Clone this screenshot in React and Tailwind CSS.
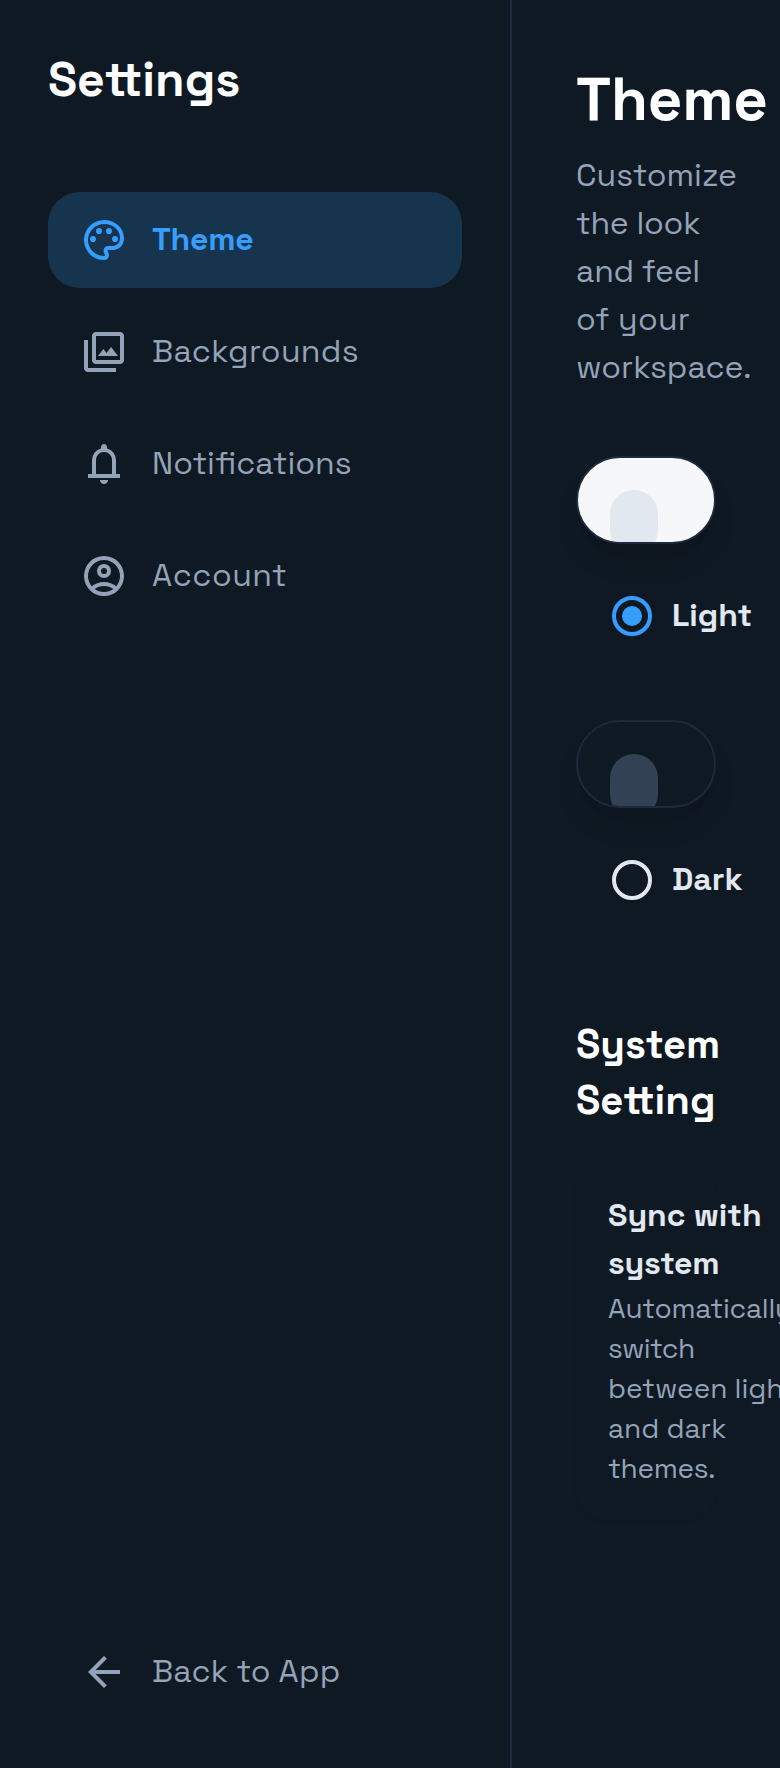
const PATHS = {
  palette:
    "M480-80q-82 0-155-31.5t-127.5-86Q143-252 111.5-325T80-480q0-83 32.5-156t88-127Q256-817 330-848.5T488-880q80 0 151 27.5t124.5 76q53.5 48.5 85 115T880-518q0 115-70 176.5T640-280h-74q-9 0-12.5 5t-3.5 11q0 12 15 34.5t15 51.5q0 50-27.5 74T480-80Zm-220-360q26 0 43-17t17-43q0-26-17-43t-43-17q-26 0-43 17t-17 43q0 26 17 43t43 17Zm120-160q26 0 43-17t17-43q0-26-17-43t-43-17q-26 0-43 17t-17 43q0 26 17 43t43 17Zm200 0q26 0 43-17t17-43q0-26-17-43t-43-17q-26 0-43 17t-17 43q0 26 17 43t43 17Zm120 160q26 0 43-17t17-43q0-26-17-43t-43-17q-26 0-43 17t-17 43q0 26 17 43t43 17ZM480-160q9 0 14.5-5t5.5-13q0-14-15-33t-15-57q0-42 29-67t71-25h70q66 0 113-38.5T800-518q0-121-92.5-201.5T488-800q-136 0-232 93t-96 227q0 133 93.5 226.5T480-160Z",
  photos:
    "M360-400h400L622-580l-92 120-62-80-108 140Zm-40 160q-33 0-56.5-23.5T240-320v-480q0-33 23.5-56.5T320-880h480q33 0 56.5 23.5T880-800v480q0 33-23.5 56.5T800-240H320Zm0-80h480v-480H320v480ZM160-80q-33 0-56.5-23.5T80-160v-560h80v560h560v80H160Z",
  bell: "M160-200v-80h80v-280q0-83 50-147.5T420-792v-28q0-25 17.5-42.5T480-880q25 0 42.5 17.5T540-820v28q80 20 130 84.5T720-560v280h80v80H160Zm320 120q-33 0-56.5-23.5T400-160h160q0 33-23.5 56.5T480-80ZM320-280h320v-280q0-66-47-113t-113-47q-66 0-113 47t-47 113v280Z",
  account:
    "M234-276q51-39 114-61.5T480-360q69 0 132 22.5T726-276q35-41 54.5-93T800-480q0-133-93.5-226.5T480-800q-133 0-226.5 93.5T160-480q0 59 19.5 111t54.5 93Zm246-164q-59 0-99.5-40.5T340-580q0-59 40.5-99.5T480-720q59 0 99.5 40.5T620-580q0 59-40.5 99.5T480-440Zm0 360q-83 0-156-31.5T197-197q-54-54-85.5-127T80-480q0-83 31.5-156T197-763q54-54 127-85.5T480-880q83 0 156 31.5T763-763q54 54 85.5 127T880-480q0 83-31.5 156T763-197q-54 54-127 85.5T480-80Zm0-80q53 0 100-15.5t86-44.5q-39-29-86-44.5T480-280q-53 0-100 15.5T294-220q39 29 86 44.5T480-160Zm0-360q26 0 43-17t17-43q0-26-17-43t-43-17q-26 0-43 17t-17 43q0 26 17 43t43 17Z",
  back: "m313-440 224 224-57 56-320-320 320-320 57 56-224 224h487v80H313Z",
};

function Icon({ name }) {
  return (
    <svg className="size-12 shrink-0" viewBox="0 -960 960 960" fill="currentColor" aria-hidden="true">
      <path d={PATHS[name]} />
    </svg>
  );
}

function NavItem({ icon, label, active, tracking }) {
  return (
    <a
      className={
        "flex h-24 items-center gap-6 rounded-[32px] px-8 text-[32px] leading-[48px] " +
        (active ? "bg-[#17344f] font-bold text-[#359eff]" : "text-[#94a3b8]")
      }
    >
      <Icon name={icon} />
      <span className={"pb-0.5 whitespace-nowrap " + tracking}>{label}</span>
    </a>
  );
}

function ThemeOption({ label, checked, surface, shape }) {
  return (
    <div className="flex flex-col gap-6">
      <div
        className={
          "h-[88px] w-[140px] overflow-hidden rounded-[48px] border-2 border-[#1e293b] pt-8 pl-8 shadow-[0_20px_30px_-6px_rgba(0,0,0,0.1),0_8px_12px_-8px_rgba(0,0,0,0.1)] " +
          surface
        }
      >
        <div className={"h-16 w-12 rounded-[24px] " + shape} />
      </div>
      <div className="flex h-24 items-center gap-4 pl-8">
        <svg
          className={"size-12 shrink-0 " + (checked ? "text-[#359eff]" : "text-[#e2e8f0]")}
          viewBox="0 0 48 48"
          fill="none"
        >
          <circle cx="24" cy="24" r="18" stroke="currentColor" strokeWidth="4" />
          {checked && <circle cx="24" cy="24" r="10" fill="currentColor" />}
        </svg>
        <span className="pb-0.5 text-[32px] leading-[48px] font-bold whitespace-nowrap text-[#e2e8f0]">
          {label}
        </span>
      </div>
    </div>
  );
}

function Line({ children, tracking = "" }) {
  return <span className={"block whitespace-nowrap " + tracking}>{children}</span>;
}

export default function App() {
  return (
    <div className="flex h-[1768px] w-[780px] overflow-hidden bg-[#0f1923] font-['Space_Grotesk',Inter,sans-serif]">
      <aside className="flex w-[512px] shrink-0 flex-col border-r-2 border-[#1e293b] p-12">
        <h1 className="text-[48px] leading-[63px] font-bold text-white">Settings</h1>
        <nav className="mt-[81px] flex flex-col gap-4">
          <NavItem icon="palette" label="Theme" tracking="tracking-[-0.25px]" active />
          <NavItem icon="photos" label="Backgrounds" tracking="tracking-[0.35px]" />
          <NavItem icon="bell" label="Notifications" tracking="[font-feature-settings:'liga'] tracking-normal" />
          <NavItem icon="account" label="Account" tracking="tracking-[0.5px]" />
        </nav>
        <div className="mt-auto">
          <NavItem icon="back" label="Back to App" tracking="tracking-[0.15px]" />
        </div>
      </aside>
      <main className="flex w-[268px] shrink-0 flex-col px-16 pt-[62px]">
        <h2 className="text-[60px] leading-[75px] font-bold text-white">
          <Line tracking="tracking-[-0.2px]">Theme</Line>
        </h2>
        <p className="mt-[14px] text-[32px] leading-[48px] text-[#94a3b8]">
          <Line>Customize</Line>
          <Line tracking="tracking-[-0.25px]">the look</Line>
          <Line tracking="tracking-[-0.25px]">and feel</Line>
          <Line tracking="tracking-[0.2px]">of your</Line>
          <Line>workspace.</Line>
        </p>
        <div className="mt-[65px] flex flex-col gap-14">
          <ThemeOption label="Light" checked surface="bg-[#f5f7f8]" shape="bg-[#e2e8f0]" />
          <ThemeOption label="Dark" surface="bg-[#0f1923]" shape="bg-[#334155]" />
        </div>
        <h3 className="mt-[89px] text-[40px] leading-[56px] font-bold text-white">
          <Line>System</Line>
          <Line>Setting</Line>
        </h3>
        <section className="mt-[31px] w-[140px] rounded-[32px] px-8 pt-[31px] pb-8 shadow-[0_2px_4px_rgba(0,0,0,0.05)]">
          <h4 className="text-[32px] leading-[48px] font-bold text-[#e2e8f0]">
            <Line>Sync with</Line>
            <Line tracking="tracking-[-0.25px]">system</Line>
          </h4>
          <p className="mt-px text-[28px] leading-[40px] text-[#94a3b8]">
            <Line tracking="tracking-[-0.25px]">Automatically</Line>
            <Line tracking="tracking-[-0.6px]">switch</Line>
            <Line>between light</Line>
            <Line>and dark</Line>
            <Line tracking="tracking-[-0.3px]">themes.</Line>
          </p>
        </section>
      </main>
    </div>
  );
}
